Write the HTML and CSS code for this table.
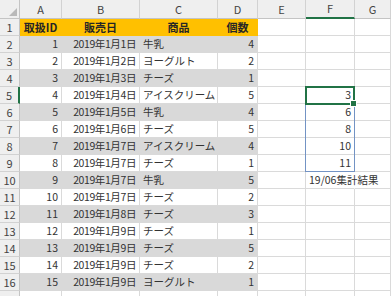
FILE: index.html
```html
<!DOCTYPE html>
<html lang="ja">
<head>
<meta charset="utf-8">
<title>Sheet</title>
<link rel="stylesheet" href="styles.css">
</head>
<body>
<div class="sheet">
  <div class="c h corner"><svg class="tri" width="8" height="8" viewBox="0 0 8 8"><polygon points="8,0 8,8 0,8" fill="#b9b9b9"/></svg></div>
  <div class="c h">A</div><div class="c h">B</div><div class="c h">C</div><div class="c h">D</div><div class="c h">E</div><div class="c h selc">F</div><div class="c h">G</div>

  <div class="c r">1</div><div class="c y">取扱ID</div><div class="c y">販売日</div><div class="c y">商品</div><div class="c y">個数</div><div class="c"></div><div class="c"></div><div class="c"></div>

  <div class="c r">2</div><div class="c n g">1</div><div class="c n d g">2019年1月1日</div><div class="c t g">牛乳</div><div class="c n g">4</div><div class="c"></div><div class="c"></div><div class="c"></div>
  <div class="c r">3</div><div class="c n">2</div><div class="c n d">2019年1月2日</div><div class="c t">ヨーグルト</div><div class="c n">2</div><div class="c"></div><div class="c"></div><div class="c"></div>
  <div class="c r">4</div><div class="c n g">3</div><div class="c n d g">2019年1月3日</div><div class="c t g">チーズ</div><div class="c n g">1</div><div class="c"></div><div class="c"></div><div class="c"></div>
  <div class="c r selr">5</div><div class="c n">4</div><div class="c n d">2019年1月4日</div><div class="c t">アイスクリーム</div><div class="c n">5</div><div class="c"></div><div class="c n active-cell">3<span class="range"></span><span class="active"><span class="handle"></span></span></div><div class="c"></div>
  <div class="c r">6</div><div class="c n g">5</div><div class="c n d g">2019年1月5日</div><div class="c t g">牛乳</div><div class="c n g">4</div><div class="c"></div><div class="c n">6</div><div class="c"></div>
  <div class="c r">7</div><div class="c n">6</div><div class="c n d">2019年1月6日</div><div class="c t">チーズ</div><div class="c n">5</div><div class="c"></div><div class="c n">8</div><div class="c"></div>
  <div class="c r">8</div><div class="c n g">7</div><div class="c n d g">2019年1月7日</div><div class="c t g">アイスクリーム</div><div class="c n g">4</div><div class="c"></div><div class="c n">10</div><div class="c"></div>
  <div class="c r">9</div><div class="c n">8</div><div class="c n d">2019年1月7日</div><div class="c t">チーズ</div><div class="c n">1</div><div class="c"></div><div class="c n">11</div><div class="c"></div>
  <div class="c r">10</div><div class="c n g">9</div><div class="c n d g">2019年1月7日</div><div class="c t g">牛乳</div><div class="c n g">5</div><div class="c"></div><div class="c t spill">19/06集計結果</div><div class="c"></div>
  <div class="c r">11</div><div class="c n">10</div><div class="c n d">2019年1月7日</div><div class="c t">チーズ</div><div class="c n">2</div><div class="c"></div><div class="c"></div><div class="c"></div>
  <div class="c r">12</div><div class="c n g">11</div><div class="c n d g">2019年1月8日</div><div class="c t g">チーズ</div><div class="c n g">3</div><div class="c"></div><div class="c"></div><div class="c"></div>
  <div class="c r">13</div><div class="c n">12</div><div class="c n d">2019年1月9日</div><div class="c t">チーズ</div><div class="c n">1</div><div class="c"></div><div class="c"></div><div class="c"></div>
  <div class="c r">14</div><div class="c n g">13</div><div class="c n d g">2019年1月9日</div><div class="c t g">チーズ</div><div class="c n g">5</div><div class="c"></div><div class="c"></div><div class="c"></div>
  <div class="c r">15</div><div class="c n">14</div><div class="c n d">2019年1月9日</div><div class="c t">チーズ</div><div class="c n">2</div><div class="c"></div><div class="c"></div><div class="c"></div>
  <div class="c r">16</div><div class="c n g">15</div><div class="c n d g">2019年1月9日</div><div class="c t g">ヨーグルト</div><div class="c n g">1</div><div class="c"></div><div class="c"></div><div class="c"></div>
  <div class="c r">17</div><div class="c"></div><div class="c"></div><div class="c"></div><div class="c"></div><div class="c"></div><div class="c"></div><div class="c"></div>
</div>
</body>
</html>
```
FILE: styles.css
```css
html, body {
  margin: 0;
  padding: 0;
}
body {
  width: 391px;
  height: 296px;
  overflow: hidden;
  background: #ffffff;
  font-family: "Noto Sans CJK JP", "Noto Sans", sans-serif;
  font-size: 10.5px;
  color: #333333;
}
.sheet {
  display: grid;
  grid-template-columns: 20px 42px 78px 78px 40px 48px 49px 36px;
  grid-template-rows: 19px repeat(17, 17px);
}
.c {
  box-sizing: border-box;
  border-right: 1px solid #dadada;
  border-bottom: 1px solid #dadada;
  display: flex;
  align-items: center;
  padding: 0 3px;
  white-space: nowrap;
  line-height: 1;
  min-width: 0;
}
.h {
  background: #efefef;
  border-right-color: #d2d2d2;
  border-bottom-color: #c4c4c4;
  justify-content: center;
  color: #444444;
  font-size: 11px;
  padding: 0;
}
.corner {
  position: relative;
  border-right-color: #c4c4c4;
}
.tri {
  position: absolute;
  right: 2px;
  bottom: 2px;
}
.selc {
  border-bottom: 2px solid #217346;
}
.r {
  background: #efefef;
  border-right-color: #c4c4c4;
  border-bottom-color: #d2d2d2;
  justify-content: center;
  color: #444444;
  font-size: 11px;
  padding: 0;
}
.selr {
  border-right: 2px solid #217346;
}
.y {
  background: #ffc000;
  border-color: #ffc000;
  justify-content: center;
  font-weight: bold;
  font-size: 11px;
  color: #262626;
}
.g {
  background: #d9d9d9;
  border-color: #d9d9d9;
}
.n {
  justify-content: flex-end;
}
.d {
  letter-spacing: -0.4px;
  padding-right: 3px;
}
.t {
  justify-content: flex-start;
}
.spill {
  overflow: visible;
  border-right-color: #ffffff;
}
.active-cell {
  position: relative;
}
.range {
  position: absolute;
  left: -1px;
  top: -1px;
  width: 50px;
  height: 86px;
  box-sizing: border-box;
  border: 1px solid #7393c4;
}
.active {
  position: absolute;
  left: -1px;
  top: -1px;
  width: 50px;
  height: 19px;
  box-sizing: border-box;
  border: 2px solid #217346;
}
.handle {
  position: absolute;
  right: -4px;
  bottom: -4px;
  width: 5px;
  height: 5px;
  background: #217346;
  border: 1px solid #ffffff;
}
```
